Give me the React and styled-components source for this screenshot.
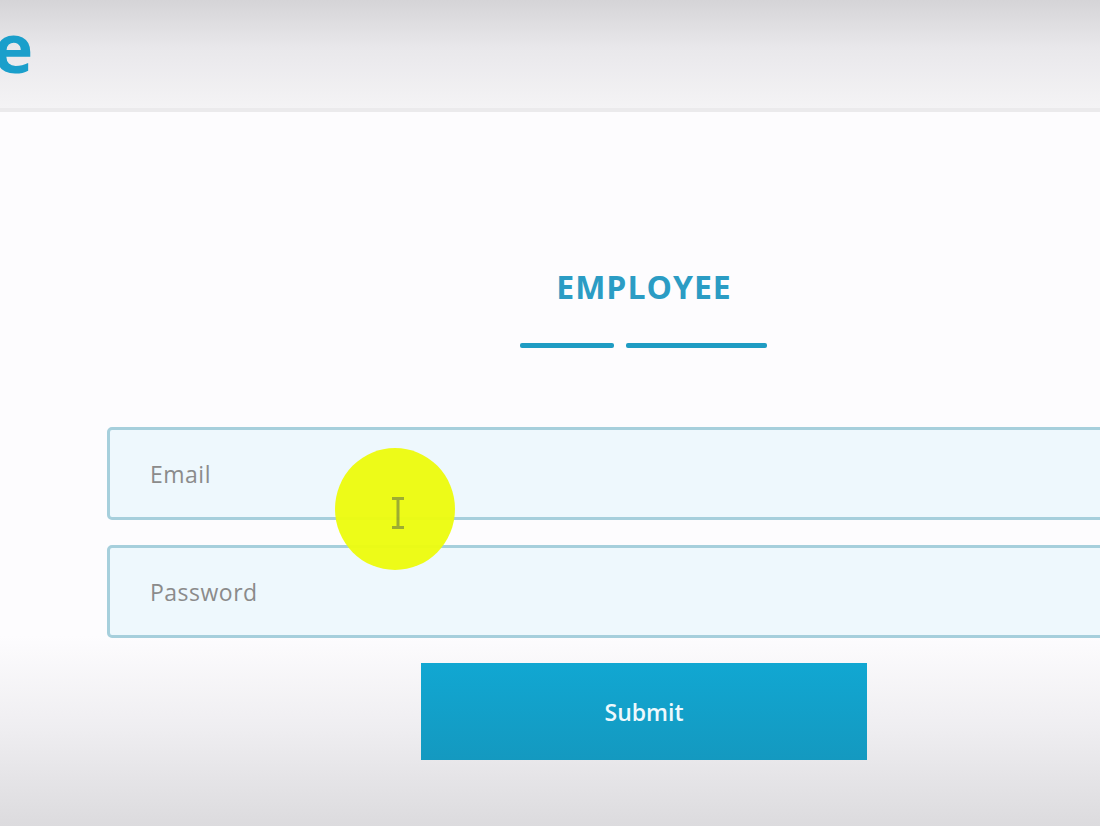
import React from 'react';
import styled, { createGlobalStyle } from 'styled-components';

const GlobalStyle = createGlobalStyle`
  html, body {
    margin: 0;
    padding: 0;
    overflow: hidden;
  }
  body {
    font-family: "Open Sans", "Liberation Sans", sans-serif;
    background: #fdfcfe;
  }
`;

const Page = styled.div`
  position: relative;
  height: 826px;
  overflow: hidden;
  background: linear-gradient(to bottom, #fdfcfe 0%, #fdfcfe 77%, #efeef1 88%, #dcdbde 100%);
`;

const Header = styled.header`
  height: 108px;
  display: flex;
  align-items: center;
  overflow: hidden;
  background: linear-gradient(to bottom, #d5d4d7 0%, #e9e8eb 45%, #f4f3f5 100%);
  border-bottom: 4px solid #ebeaec;
`;

const Brand = styled.span`
  margin-left: -7px;
  margin-top: -14px;
  font-size: 68px;
  font-weight: 700;
  color: #1a9fcb;
  line-height: 1;
`;

const Main = styled.main`
  padding: 155px 0 0 107px;
`;

const Form = styled.form`
  width: 1074px;
  display: flex;
  flex-direction: column;
  align-items: center;
`;

const Title = styled.h2`
  margin: 0;
  font-size: 32px;
  line-height: 40px;
  font-weight: 700;
  letter-spacing: 1px;
  color: #2b9cc4;
`;

const Underline = styled.div`
  display: flex;
  gap: 12px;
  margin-top: 36px;
  margin-right: 1px;
`;

const Bar = styled.span`
  display: block;
  width: ${p => p.$w}px;
  height: 5px;
  border-radius: 2px;
  background: #1f9cc3;
`;

const Field = styled.input`
  box-sizing: border-box;
  width: 100%;
  height: 93px;
  margin-top: ${p => p.$top}px;
  padding: 0 0 0 40px;
  border: 3px solid #a6cfdc;
  border-radius: 5px;
  background: #eef8fd;
  font-family: inherit;
  font-size: 23px;
  letter-spacing: 0.5px;
  color: #555;
  outline: none;

  &::placeholder {
    color: #8b8b8b;
  }
`;

const Submit = styled.button`
  width: 446px;
  height: 97px;
  margin-top: 25px;
  border: none;
  background: linear-gradient(to bottom, #11a7d2, #1499c0);
  color: #eef9fd;
  font-family: inherit;
  font-size: 23px;
  font-weight: 600;
  cursor: pointer;
`;

const CursorMark = styled.div`
  position: absolute;
  left: 335px;
  top: 448px;
  width: 120px;
  height: 122px;
  border-radius: 50%;
  background: #edfc0f;
  opacity: 0.96;
  display: flex;
  align-items: center;
  justify-content: center;
  pointer-events: none;

  svg {
    margin-left: 6px;
    margin-top: 8px;
  }
`;

export default function App() {
  return (
    <>
      <GlobalStyle />
      <Page>
        <Header>
          <Brand>e</Brand>
        </Header>
        <Main>
          <Form onSubmit={e => e.preventDefault()}>
            <Title>EMPLOYEE</Title>
            <Underline>
              <Bar $w={94} />
              <Bar $w={141} />
            </Underline>
            <Field $top={79} type="email" placeholder="Email" />
            <Field $top={25} type="password" placeholder="Password" />
            <Submit type="submit">Submit</Submit>
          </Form>
        </Main>
        <CursorMark>
          <svg width="14" height="32" viewBox="0 0 14 32">
            <path d="M1 1.5h12M1 30.5h12M7 1.5v29" stroke="#9aa92a" strokeWidth="3" fill="none" />
          </svg>
        </CursorMark>
      </Page>
    </>
  );
}
